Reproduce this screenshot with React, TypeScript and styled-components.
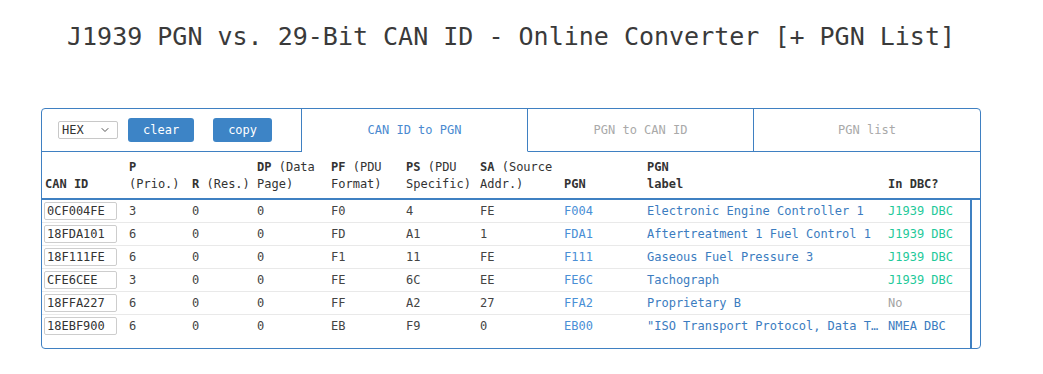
import styled, { createGlobalStyle } from "styled-components";
import { ChevronDown } from "lucide-react";

const GlobalStyle = createGlobalStyle`
  html, body {
    margin: 0;
    padding: 0;
    background: #fff;
  }
  body {
    font-family: "DejaVu Sans Mono", "Liberation Mono", monospace;
    color: #333;
  }
`;

const Page = styled.div`
  width: 940px;
  padding: 22px 0 0 41px;
`;

const Title = styled.h1`
  margin: 0 0 56px;
  font-size: 25px;
  line-height: 30px;
  font-weight: 400;
  color: #3a3a3a;
  text-align: center;
  white-space: nowrap;
`;

const Card = styled.div`
  border: 1px solid #3f80c2;
  border-radius: 4px;
  overflow: hidden;
`;

const TopBar = styled.div`
  display: grid;
  grid-template-columns: 260px 226px 226px 226px;
  height: 43px;
`;

const Toolbar = styled.div`
  display: flex;
  align-items: center;
  gap: 10px;
  padding-left: 16px;
  border-right: 1px solid #3f80c2;
  border-bottom: 1px solid #3f80c2;
`;

const SelectBox = styled.div`
  display: flex;
  align-items: center;
  justify-content: space-between;
  box-sizing: border-box;
  width: 60px;
  height: 18px;
  padding: 0 6px 0 3px;
  border: 1px solid #c8c8c8;
  border-radius: 2px;
  font-size: 12px;
  color: #333;
`;

const Button = styled.button`
  height: 24px;
  padding: 0 15px;
  margin-right: 9px;
  border: 0;
  border-radius: 3px;
  background: #3d84c6;
  color: #fff;
  font-family: inherit;
  font-size: 12px;
  cursor: pointer;
`;

const Tab = styled.div<{ $active?: boolean; $last?: boolean }>`
  display: flex;
  align-items: center;
  justify-content: center;
  font-size: 12px;
  color: ${p => (p.$active ? "#4a8ad0" : "#a9a9a9")};
  border-right: ${p => (p.$last ? "0" : "1px solid #3f80c2")};
  border-bottom: ${p => (p.$active ? "1px solid transparent" : "1px solid #3f80c2")};
`;

const COLS = "84px 63px 65px 74px 75px 74px 84px 83px 241px 85px";

const HeaderRow = styled.div`
  display: grid;
  grid-template-columns: ${COLS};
  align-items: end;
  padding: 7px 0 5px;
  border-bottom: 2px solid #3f80c2;
`;

const HeadCell = styled.div`
  padding-left: 3px;
  font-size: 12px;
  line-height: 17px;
  color: #333;

  b {
    font-weight: 700;
  }
`;

const Body = styled.div`
  width: 928px;
  border-right: 2px solid #3f80c2;
  padding-bottom: 11px;
`;

const Row = styled.div`
  display: grid;
  grid-template-columns: ${COLS};
  align-items: center;
  height: 22px;
  border-bottom: 1px solid #e9e9e9;

  &:last-child {
    border-bottom: 0;
  }
`;

const Cell = styled.div<{ $tone?: "text" | "link" | "label" | "dbc" | "muted" }>`
  padding: 0 6px 0 3px;
  font-size: 12px;
  white-space: nowrap;
  overflow: hidden;
  text-overflow: ellipsis;
  color: ${p =>
    p.$tone === "link"
      ? "#4a8fd6"
      : p.$tone === "label"
      ? "#3b7cc0"
      : p.$tone === "dbc"
      ? "#1fc99a"
      : p.$tone === "muted"
      ? "#a3a3a3"
      : "#444"};
`;

const IdInput = styled.input`
  box-sizing: border-box;
  width: 73px;
  height: 18px;
  margin-left: -1px;
  padding: 0 2px;
  border: 1px solid #cdcdcd;
  border-radius: 2px;
  font-family: inherit;
  font-size: 12px;
  color: #333;
  outline: none;
`;

type Entry = {
  id: string;
  p: string;
  r: string;
  dp: string;
  pf: string;
  ps: string;
  sa: string;
  pgn: string;
  label: string;
  dbc: string;
  dbcTone: "dbc" | "muted" | "label";
};

const rows: Entry[] = [
  { id: "0CF004FE", p: "3", r: "0", dp: "0", pf: "F0", ps: "4", sa: "FE", pgn: "F004", label: "Electronic Engine Controller 1", dbc: "J1939 DBC", dbcTone: "dbc" },
  { id: "18FDA101", p: "6", r: "0", dp: "0", pf: "FD", ps: "A1", sa: "1", pgn: "FDA1", label: "Aftertreatment 1 Fuel Control 1", dbc: "J1939 DBC", dbcTone: "dbc" },
  { id: "18F111FE", p: "6", r: "0", dp: "0", pf: "F1", ps: "11", sa: "FE", pgn: "F111", label: "Gaseous Fuel Pressure 3", dbc: "J1939 DBC", dbcTone: "dbc" },
  { id: "CFE6CEE", p: "3", r: "0", dp: "0", pf: "FE", ps: "6C", sa: "EE", pgn: "FE6C", label: "Tachograph", dbc: "J1939 DBC", dbcTone: "dbc" },
  { id: "18FFA227", p: "6", r: "0", dp: "0", pf: "FF", ps: "A2", sa: "27", pgn: "FFA2", label: "Proprietary B", dbc: "No", dbcTone: "muted" },
  { id: "18EBF900", p: "6", r: "0", dp: "0", pf: "EB", ps: "F9", sa: "0", pgn: "EB00", label: "\"ISO Transport Protocol, Data Transfer\"", dbc: "NMEA DBC", dbcTone: "label" },
];

const App = (): JSX.Element => {
  return (
    <Page>
      <GlobalStyle />
      <Title>J1939 PGN vs. 29-Bit CAN ID - Online Converter [+ PGN List]</Title>
      <Card>
        <TopBar>
          <Toolbar>
            <SelectBox>
              <span>HEX</span>
              <ChevronDown size={12} strokeWidth={2} color="#555" />
            </SelectBox>
            <Button>clear</Button>
            <Button>copy</Button>
          </Toolbar>
          <Tab $active>CAN ID to PGN</Tab>
          <Tab>PGN to CAN ID</Tab>
          <Tab $last>PGN list</Tab>
        </TopBar>

        <HeaderRow>
          <HeadCell><b>CAN ID</b></HeadCell>
          <HeadCell><b>P</b><br />(Prio.)</HeadCell>
          <HeadCell><b>R</b> (Res.)</HeadCell>
          <HeadCell><b>DP</b> (Data<br />Page)</HeadCell>
          <HeadCell><b>PF</b> (PDU<br />Format)</HeadCell>
          <HeadCell><b>PS</b> (PDU<br />Specific)</HeadCell>
          <HeadCell><b>SA</b> (Source<br />Addr.)</HeadCell>
          <HeadCell><b>PGN</b></HeadCell>
          <HeadCell><b>PGN</b><br /><b>label</b></HeadCell>
          <HeadCell><b>In DBC?</b></HeadCell>
        </HeaderRow>

        <Body>
          {rows.map(r => (
            <Row key={r.id}>
              <Cell><IdInput defaultValue={r.id} /></Cell>
              <Cell>{r.p}</Cell>
              <Cell>{r.r}</Cell>
              <Cell>{r.dp}</Cell>
              <Cell>{r.pf}</Cell>
              <Cell>{r.ps}</Cell>
              <Cell>{r.sa}</Cell>
              <Cell $tone="link">{r.pgn}</Cell>
              <Cell $tone="label">{r.label}</Cell>
              <Cell $tone={r.dbcTone}>{r.dbc}</Cell>
            </Row>
          ))}
        </Body>
      </Card>
    </Page>
  );
};

export default App;
